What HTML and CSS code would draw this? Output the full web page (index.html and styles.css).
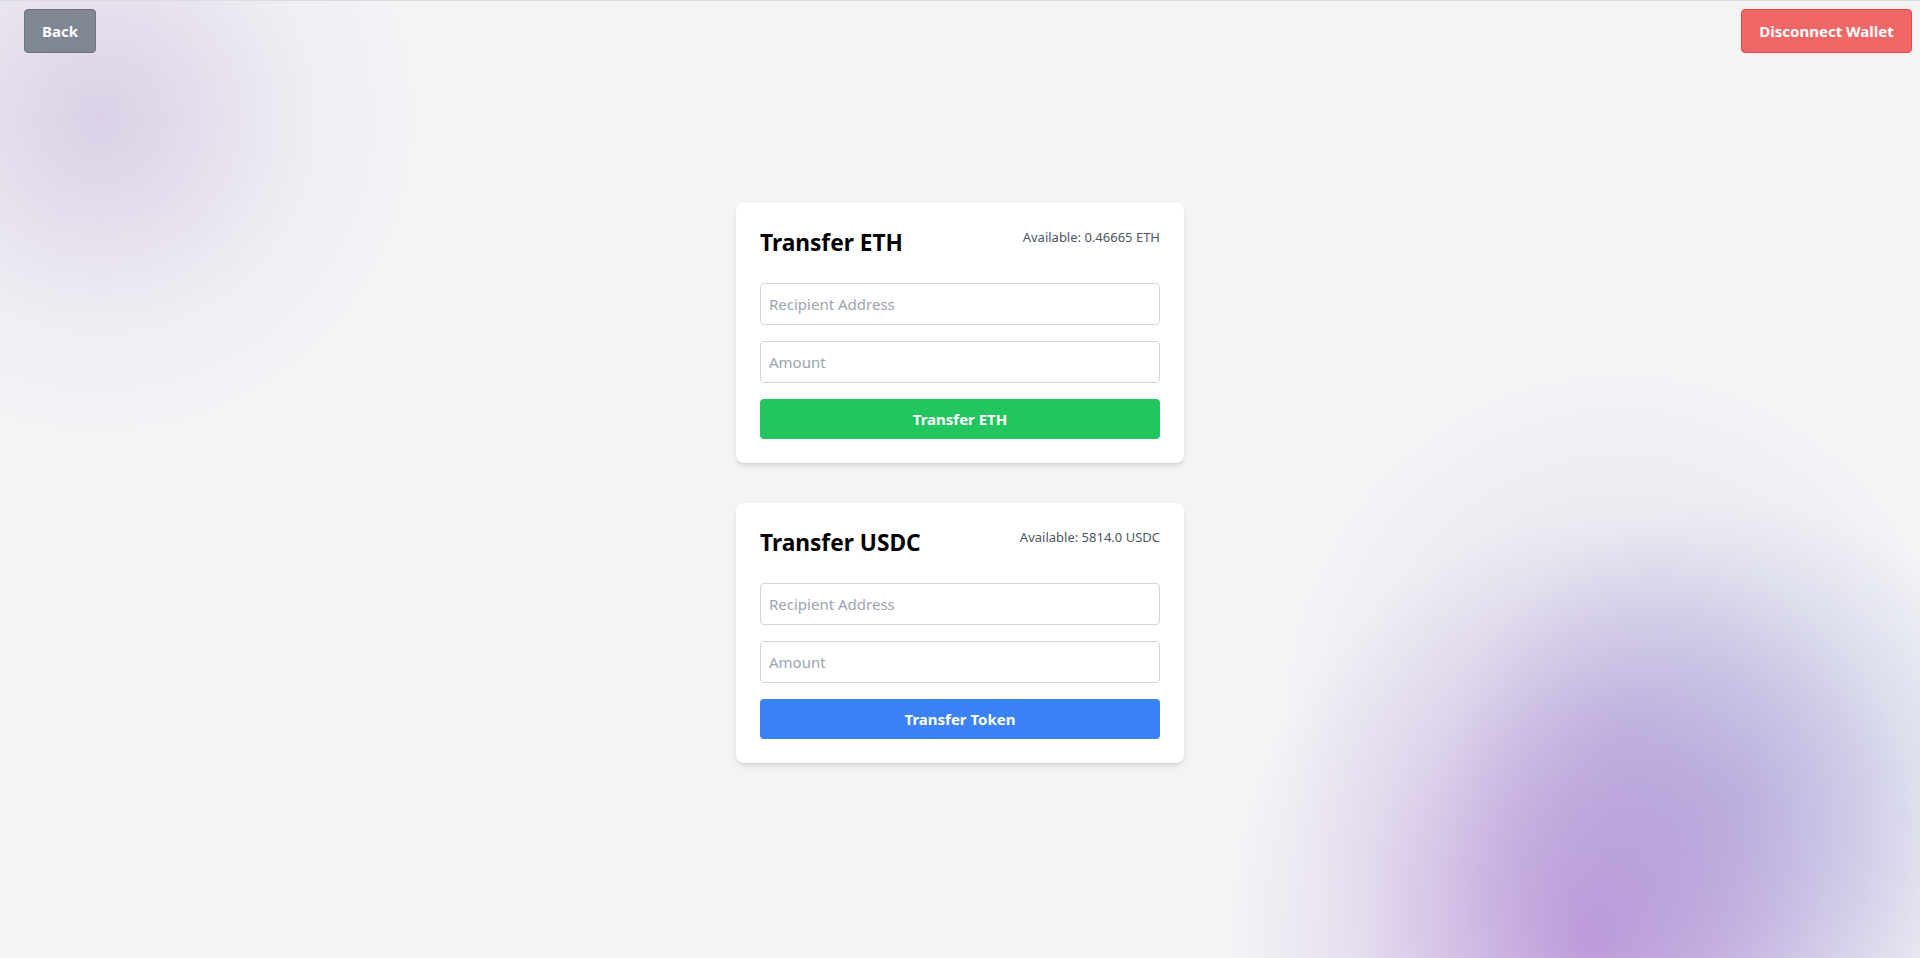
FILE: index.html
```html
<!DOCTYPE html>
<html lang="en">
<head>
<meta charset="utf-8">
<title>Transfer</title>
<link rel="stylesheet" href="styles.css">
</head>
<body>
<div class="page">
  <header class="topbar">
    <button class="btn-back">Back</button>
    <button class="btn-disconnect">Disconnect Wallet</button>
  </header>
  <main class="cards">
    <section class="card">
      <div class="card-head">
        <h2 class="card-title">Transfer ETH</h2>
        <span class="balance">Available: 0.46665 ETH</span>
      </div>
      <input class="field" type="text" placeholder="Recipient Address">
      <input class="field" type="text" placeholder="Amount">
      <button class="btn-action green">Transfer ETH</button>
    </section>
    <section class="card">
      <div class="card-head">
        <h2 class="card-title">Transfer USDC</h2>
        <span class="balance">Available: 5814.0 USDC</span>
      </div>
      <input class="field" type="text" placeholder="Recipient Address">
      <input class="field" type="text" placeholder="Amount">
      <button class="btn-action blue">Transfer Token</button>
    </section>
  </main>
</div>
</body>
</html>
```

FILE: styles.css
```css
* { box-sizing: border-box; }
html, body { margin: 0; padding: 0; height: 100%; }
body {
  font-family: "Noto Sans", "Open Sans", sans-serif;
  background-color: #f3f4f6;
  background-image:
    radial-gradient(ellipse 360px 420px at 1590px 940px, rgba(165,110,205,0.6) 0, rgba(165,110,205,0.42) 30%, rgba(165,110,205,0.16) 65%, rgba(165,110,205,0) 100%),
    radial-gradient(circle at 1740px 800px, rgba(145,150,210,0.42) 0, rgba(145,150,210,0.28) 120px, rgba(145,150,210,0) 300px),
    radial-gradient(ellipse 340px 360px at 1620px 730px, rgba(170,160,210,0.32) 0, rgba(170,160,210,0.14) 50%, rgba(170,160,210,0) 100%),
    radial-gradient(circle at 100px 118px, rgba(190,165,212,0.45) 0, rgba(190,165,212,0.28) 100px, rgba(190,165,212,0.08) 210px, rgba(190,165,212,0) 320px);
  background-repeat: no-repeat;
  overflow: hidden;
}
.page {
  min-height: 958px;
  border-top: 1px solid #dcdcdf;
}
.topbar {
  display: flex;
  justify-content: space-between;
  padding: 8px 8px 0 24px;
}
.topbar button {
  font-family: inherit;
  font-size: 15px;
  font-weight: 700;
  color: #fff;
  height: 44px;
  padding: 0 16px;
  border-radius: 4px;
  line-height: 24px;
  white-space: nowrap;
  cursor: pointer;
}
.btn-back {
  background: #818693;
  border: 1px solid #6b7280;
  min-width: 72px;
}
.btn-disconnect {
  background: #f06768;
  border: 1px solid #ef4444;
  min-width: 171px;
}
.cards {
  display: flex;
  flex-direction: column;
  align-items: center;
  gap: 40px;
  margin-top: 150px;
}
.card {
  width: 448px;
  background: #fff;
  border-radius: 8px;
  padding: 24px;
  box-shadow: 0 4px 6px -1px rgba(0,0,0,0.1), 0 2px 4px -2px rgba(0,0,0,0.1);
  display: flex;
  flex-direction: column;
  gap: 16px;
}
.card-head {
  display: flex;
  justify-content: space-between;
  margin-bottom: 8px;
}
.card-title {
  margin: 0;
  font-size: 22.7px;
  line-height: 32px;
  font-weight: 700;
  color: #000;
}
.balance {
  font-size: 13px;
  line-height: 20px;
  color: #4b5563;
}
.field {
  display: block;
  width: 100%;
  height: 42px;
  padding: 8px;
  border: 1px solid #d1d5db;
  border-radius: 4px;
  font-family: inherit;
  font-size: 15px;
  line-height: 24px;
  color: #111;
  background: #fff;
}
.field::placeholder { color: #9ca3af; }
.btn-action {
  height: 40px;
  border: none;
  border-radius: 4px;
  color: #fff;
  font-family: inherit;
  font-size: 15px;
  font-weight: 700;
  line-height: 24px;
}
.green { background: #22c55e; }
.blue { background: #3b82f6; }
```
